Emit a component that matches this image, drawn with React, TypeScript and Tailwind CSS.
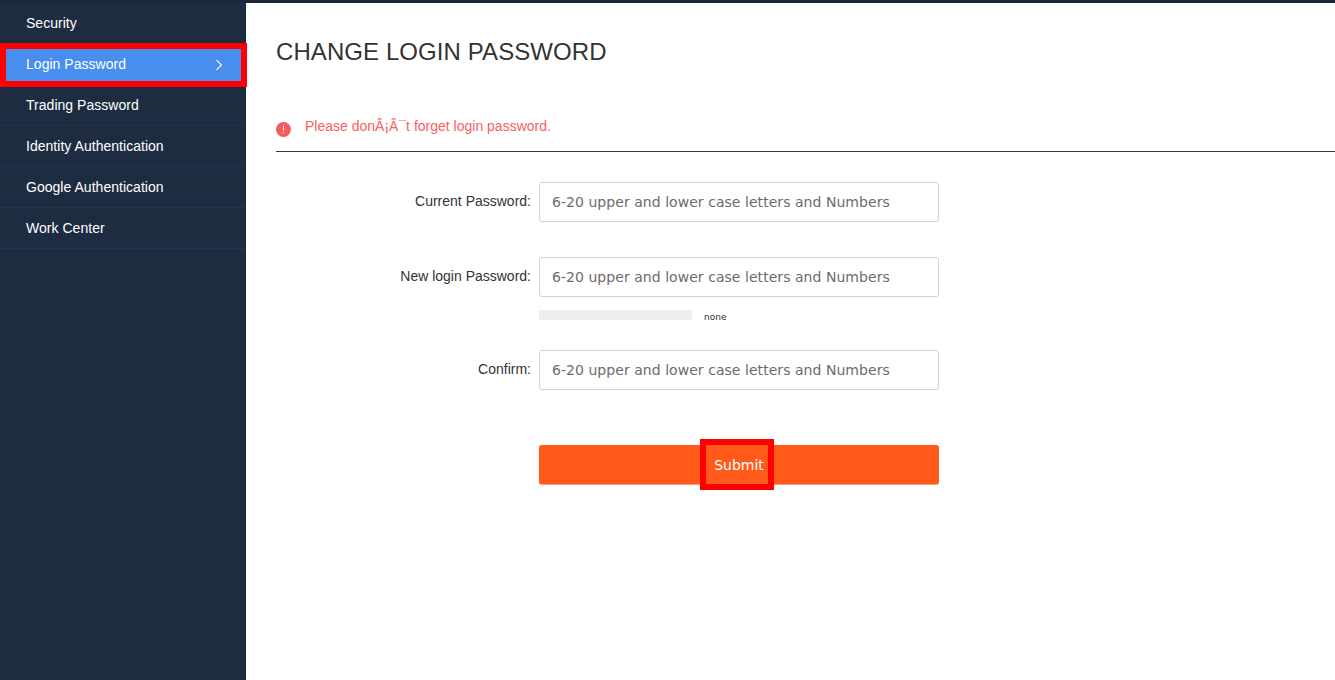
const menu = [
  'Security',
  'Login Password',
  'Trading Password',
  'Identity Authentication',
  'Google Authentication',
  'Work Center',
];

const ACTIVE = 'Login Password';
const HINT = '6-20 upper and lower case letters and Numbers';

function Sidebar() {
  return (
    <nav className="w-[246px] shrink-0 bg-[#1e2c42] text-sm tracking-[0.03px] text-white">
      <ul>
        {menu.map((item) => (
          <li
            key={item}
            className={`relative flex h-[41px] items-center justify-between border-b border-[#23334a] pr-[23px] pl-[26px] ${
              item === ACTIVE ? 'bg-[#488eef]' : ''
            }`}
          >
            <span className="leading-5">{item}</span>
            {item === ACTIVE && (
              <>
                <svg className="mt-0.5 h-3 w-2" viewBox="0 0 8 12" fill="none" stroke="white" strokeWidth="1.1">
                  <path d="M1.5 1.2 6.5 6 1.5 10.8" />
                </svg>
                <span className="absolute -top-px left-0 h-11 w-[247px] border-6 border-[#ff0000]" />
              </>
            )}
          </li>
        ))}
      </ul>
    </nav>
  );
}

function Field({ label }: { label: string }) {
  return (
    <label className="flex h-10">
      <span className="mr-2 w-[255px] pt-[9px] text-right text-sm leading-5 text-[#333]">{label}</span>
      <input
        type="text"
        placeholder={HINT}
        className="h-10 w-[400px] rounded-[3px] border border-[#d2d2d2] bg-white px-3 font-['DejaVu_Sans',sans-serif] text-[14px] tracking-[0.045px] placeholder:text-[#6c6c6c] placeholder:opacity-100"
      />
    </label>
  );
}

export default function App() {
  return (
    <div className="flex h-[680px] w-[1335px] flex-col overflow-hidden bg-white font-['Liberation_Sans',sans-serif]">
      <header className="h-[3px] shrink-0 bg-[#1b2738]" />
      <div className="flex flex-1">
        <Sidebar />
        <main className="flex-1 pl-[30px]">
          <h1 className="pt-8 text-2xl leading-[34px] tracking-[0.08px] text-[#333]">CHANGE LOGIN PASSWORD</h1>
          <div className="mt-[37px] flex h-[46px] items-start border-b border-[#333a40] pt-[10px] text-sm text-[#fb6062]">
            <svg className="mt-[6px] mr-[14px] h-[15px] w-[15px]" viewBox="0 0 15 15">
              <circle cx="7.5" cy="7.5" r="7.5" fill="#f65c5e" />
              <path d="M7.5 3.7v5M7.5 10v1.2" stroke="white" strokeWidth="1" />
            </svg>
            <p className="leading-5">Please donÂ¡Â¯t forget login password.</p>
          </div>
          <form className="pt-[30px]">
            <Field label="Current Password:" />
            <div className="mt-[35px]">
              <Field label="New login Password:" />
            </div>
            <div className="mt-[13px] ml-[263px] flex h-[10px] items-start">
              <span className="h-[10px] w-[153px] bg-[#eee]" />
              <span className="ml-3 pt-px font-['DejaVu_Sans',sans-serif] text-[9px] leading-3 text-[#1e2c42]">none</span>
            </div>
            <div className="mt-[30px]">
              <Field label="Confirm:" />
            </div>
            <button
              type="button"
              className="relative mt-[55px] ml-[263px] block h-10 w-[400px] rounded-[3px] border-b border-[#ff9c75] bg-[#ff5a1a] pt-px font-['DejaVu_Sans',sans-serif] text-[14px] text-white"
            >
              Submit
              <span className="absolute -top-1.5 left-[161px] h-[51px] w-[74px] border-6 border-[#ff0000]" />
            </button>
          </form>
        </main>
      </div>
    </div>
  );
}
